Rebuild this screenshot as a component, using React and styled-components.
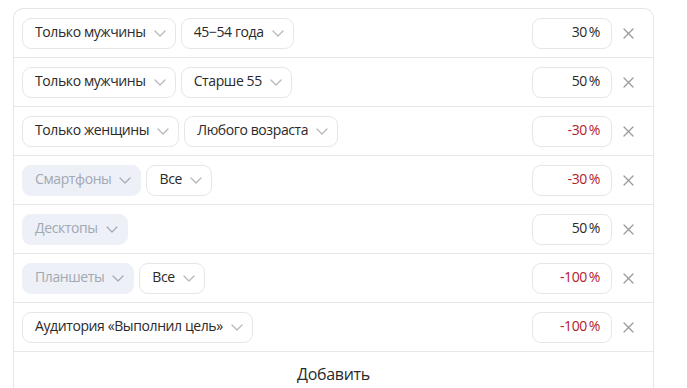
import React from "react";
import styled, { createGlobalStyle } from "styled-components";

const Global = createGlobalStyle`
  html, body { margin: 0; padding: 0; background: #fff; }
  body { font-family: "Open Sans", "Liberation Sans", sans-serif; }
`;

const Page = styled.div`
  padding: 8px 33px 0 13px;
`;

const Panel = styled.div`
  border: 1px solid #e6e6e8;
  border-bottom: none;
  border-radius: 10px 10px 0 0;
  display: flex;
  flex-direction: column;
`;

const Row = styled.div`
  display: flex;
  align-items: center;
  height: 48px;
  padding: 0 19px 0 8px;
  border-bottom: 1px solid #e8e8ea;
  gap: 5px;
`;

const Select = styled.div`
  display: flex;
  align-items: center;
  height: 31px;
  box-sizing: border-box;
  padding: 0 9px 0 12px;
  gap: 8px;
  border-radius: 9px;
  font-size: 14px;
  letter-spacing: -0.4px;
  line-height: 1;
  white-space: nowrap;
  color: ${(p) => (p.$disabled ? "#a3a8b3" : "#2a2a2a")};
  background: ${(p) => (p.$disabled ? "#edf0f7" : "#fff")};
  border: 1px solid ${(p) => (p.$disabled ? "#edf0f7" : "#e6e6e8")};
`;

const Label = styled.span`
  padding-bottom: 2px;
`;

const Spacer = styled.div`
  flex: 1;
`;

const Percent = styled.div`
  width: 80px;
  height: 31px;
  box-sizing: border-box;
  border: 1px solid #e6e6e8;
  border-radius: 9px;
  display: flex;
  align-items: center;
  justify-content: flex-end;
  padding: 0 11px 2px 0;
  font-size: 14px;
  line-height: 1;
  letter-spacing: -0.4px;
  color: ${(p) => (p.$neg ? "#b3202b" : "#2a2a2a")};
`;

const Close = styled.button`
  border: none;
  background: none;
  padding: 0;
  margin-left: 5px;
  width: 12px;
  height: 12px;
  display: flex;
  align-items: center;
  justify-content: center;
  cursor: pointer;
`;

const AddRow = styled.div`
  height: 44px;
  display: flex;
  align-items: center;
  justify-content: center;
  font-size: 16px;
  letter-spacing: -0.3px;
  color: #2a2a2a;
`;

const Chevron = ({ color }) => (
  <svg width="12" height="7" viewBox="0 0 12 7" fill="none">
    <path d="M1 1l5 5 5-5" stroke={color} strokeWidth="1.2" strokeLinecap="round" strokeLinejoin="round" />
  </svg>
);

const Cross = () => (
  <svg width="11" height="11" viewBox="0 0 11 11" fill="none">
    <path d="M1 1l9 9M10 1l-9 9" stroke="#9a9a9e" strokeWidth="1.3" strokeLinecap="round" />
  </svg>
);

const Dropdown = ({ label, disabled }) => (
  <Select $disabled={disabled}>
    <Label>{label}</Label>
    <Chevron color={disabled ? "#a3a8b3" : "#b5b5ba"} />
  </Select>
);

const rows = [
  { selects: [{ l: "Только мужчины" }, { l: "45−54 года" }], v: "30", neg: false },
  { selects: [{ l: "Только мужчины" }, { l: "Старше 55" }], v: "50", neg: false },
  { selects: [{ l: "Только женщины" }, { l: "Любого возраста" }], v: "-30", neg: true },
  { selects: [{ l: "Смартфоны", d: true }, { l: "Все" }], v: "-30", neg: true },
  { selects: [{ l: "Десктопы", d: true }], v: "50", neg: false },
  { selects: [{ l: "Планшеты", d: true }, { l: "Все" }], v: "-100", neg: true },
  { selects: [{ l: "Аудитория «Выполнил цель»" }], v: "-100", neg: true },
];

export default function App() {
  return (
    <Page>
      <Global />
      <Panel>
        {rows.map((r, i) => (
          <Row key={i}>
            {r.selects.map((s, j) => (
              <Dropdown key={j} label={s.l} disabled={s.d} />
            ))}
            <Spacer />
            <Percent $neg={r.neg}>{r.v}&#8201;%</Percent>
            <Close aria-label="Удалить">
              <Cross />
            </Close>
          </Row>
        ))}
        <AddRow>Добавить</AddRow>
      </Panel>
    </Page>
  );
}
